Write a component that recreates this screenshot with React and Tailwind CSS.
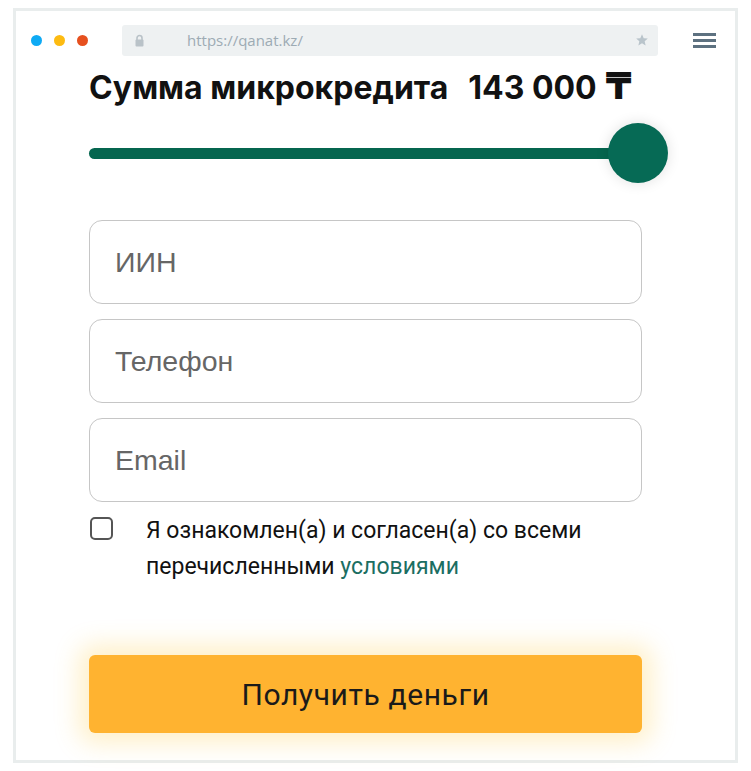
import React from "react";

export default function App() {
  return (
    <div className="w-[751px] h-[771px] bg-white overflow-hidden">
      <div className="ml-[13px] mt-[8px] w-[725px] h-[755px] border-[3px] border-[#e9eded] bg-white flex flex-col">
        {/* browser bar */}
        <div className="flex items-center pt-[14px] h-[45px]">
          <div className="flex items-center gap-[12px] ml-[15px]">
            <span className="w-[11px] h-[11px] rounded-full bg-[#0eaaf4]" />
            <span className="w-[11px] h-[11px] rounded-full bg-[#fdbb11]" />
            <span className="w-[11px] h-[11px] rounded-full bg-[#e6501e]" />
          </div>
          <div className="ml-[34px] w-[536px] h-[31px] rounded-[3px] bg-[#eef1f2] flex items-center relative">
            <svg width="9" height="13" viewBox="0 0 9 13" className="ml-[13px]">
              <path d="M2 6V4a2.5 2.5 0 0 1 5 0v2" fill="none" stroke="#b9c2c8" strokeWidth="1.6" />
              <rect x="0.5" y="5.5" width="8" height="7" rx="1" fill="#b9c2c8" />
            </svg>
            <span className="ml-[43px] text-[15px] text-[#9dabb4]" style={{ fontFamily: '"Open Sans", sans-serif' }}>
              https://qanat.kz/
            </span>
            <svg width="14" height="14" viewBox="0 0 24 24" className="absolute right-[9px] top-[8px]">
              <path d="M12 2l2.9 6.9 7.1.6-5.4 4.7 1.6 7.1L12 17.6 5.8 21.3l1.6-7.1L2 9.5l7.1-.6z" fill="#b9c4cb" />
            </svg>
          </div>
          <div className="ml-[35px] flex flex-col gap-[3.5px]">
            <span className="w-[23px] h-[2.5px] bg-[#5d7180]" />
            <span className="w-[23px] h-[2.5px] bg-[#5d7180]" />
            <span className="w-[23px] h-[2.5px] bg-[#5d7180]" />
          </div>
        </div>

        {/* content */}
        <div className="pl-[73px] w-[626px]">
          <div
            className="mt-[12px] h-[40px] flex items-baseline text-[32px] font-bold text-[#111] leading-[40px] whitespace-nowrap"
            style={{ fontFamily: 'Inter, "Noto Sans", sans-serif' }}
          >
            <span>Сумма микрокредита</span>
            <span className="ml-[20px]">143 000</span>
            <span className="ml-[9px] text-[37px] leading-[30px]" style={{ fontFamily: '"DejaVu Sans", sans-serif' }}>₸</span>
          </div>

          {/* slider */}
          <div className="relative mt-[15px] h-[60px] w-[580px] flex items-center">
            <div className="h-[11px] w-[540px] rounded-full bg-[#05664f]" />
            <div className="absolute left-[519px] top-0 w-[60px] h-[60px] rounded-full bg-[#066a55] shadow-[0_0_14px_rgba(0,0,0,0.12)]" />
          </div>

          {/* inputs */}
          <div className="mt-[37px] flex flex-col gap-[15px] w-[553px]" style={{ fontFamily: '"Liberation Sans", Arial, sans-serif' }}>
            {["ИИН", "Телефон", "Email"].map((p) => (
              <div key={p} className="h-[84px] rounded-[13px] border-[1.5px] border-[#c6c6c6] flex items-center pl-[25px] text-[28.5px] text-[#666]">
                {p}
              </div>
            ))}
          </div>

          {/* checkbox */}
          <div className="mt-[13px] flex" style={{ fontFamily: 'Roboto, "Noto Sans", sans-serif' }}>
            <div className="mt-[2px] ml-[1px] w-[23px] h-[23px] rounded-[5px] border-2 border-[#555] shrink-0" />
            <p className="ml-[33px] -mt-[2px] text-[23px] leading-[36px] text-[#111]">
              Я ознакомлен(а) и согласен(а) со всеми
              <br />
              перечисленными <span className="text-[#1b6e62]">условиями</span>
            </p>
          </div>

          {/* button */}
          <button
            className="mt-[70px] w-[553px] h-[78px] rounded-[6px] bg-[#ffb330] text-[30px] text-[#1a1a1a] shadow-[0_0_24px_10px_rgba(255,200,60,0.28)] tracking-[0.6px]"
            style={{ fontFamily: 'Roboto, "Noto Sans", sans-serif' }}
          >
            Получить деньги
          </button>
        </div>
      </div>
    </div>
  );
}
